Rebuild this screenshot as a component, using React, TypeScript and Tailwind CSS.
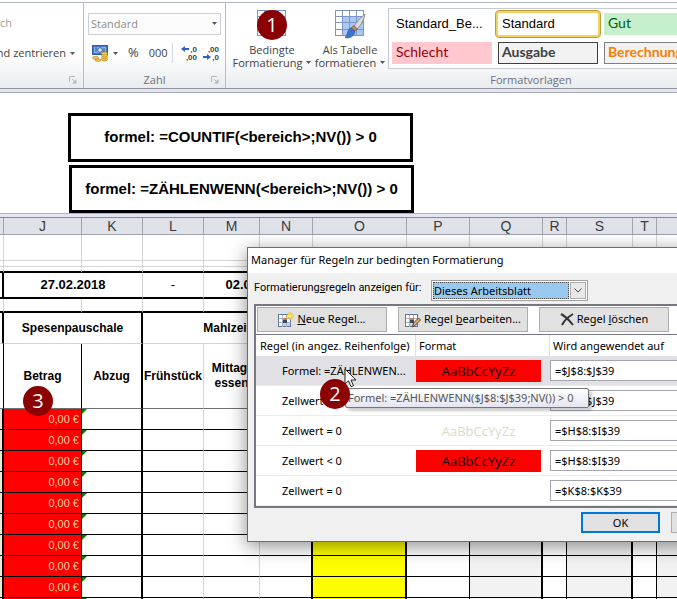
import React from "react";

const ui = "font-['Open_Sans','Noto_Sans',sans-serif]";
const tahoma = "font-['Noto_Sans','Open_Sans',sans-serif]";
const arial = "font-['Liberation_Sans',Arial,sans-serif]";
const lato = "font-['Lato','Open_Sans',sans-serif]";

function Caret() {
  return (
    <svg width="5" height="3" viewBox="0 0 5 3" className="shrink-0" aria-hidden="true">
      <path d="M0 0h5L2.5 3z" fill="#555" />
    </svg>
  );
}

function Launcher() {
  return (
    <svg width="8" height="8" viewBox="0 0 8 8" className="absolute right-[6px] bottom-1" aria-hidden="true" fill="none">
      <path d="M.5 6V.5H6M3 3l3 3" stroke="#b4b8be" />
      <path d="M7.500 3v4.500H3z" fill="#b4b8be" />
    </svg>
  );
}

function Badge({ n, className }: { n: number; className: string }) {
  return (
    <span
      className={`absolute z-20 flex size-[30px] items-center justify-center rounded-full bg-[#8b0000] text-[20px] leading-none text-white ${ui} ${className}`}
    >
      {n}
    </span>
  );
}

function GroupLabel({ children }: { children: React.ReactNode }) {
  return <div className="h-4 text-center leading-4 text-[#6a7080]">{children}</div>;
}

function CurrencyIcon() {
  return (
    <svg width="17" height="17" viewBox="0 0 17 17" aria-hidden="true">
      <rect x=".5" y=".5" width="15" height="9" fill="#4477c4" stroke="#2b5ca8" />
      <path d="M2 2h12v6H2z" fill="#8fb4e8" />
      <path d="M4 3v4M12 3v4M3 3h2M11 7h2" stroke="#2b5ca8" />
      <circle cx="8" cy="5" r="2.300" fill="#dce9fa" stroke="#2b5ca8" />
      <g fill="#f6cf55" stroke="#b67c12" strokeWidth=".7">
        <ellipse cx="12.500" cy="14.500" rx="3" ry="1.500" />
        <ellipse cx="12.500" cy="12.500" rx="3" ry="1.500" />
        <ellipse cx="12.500" cy="10.500" rx="3" ry="1.500" />
        <ellipse cx="12.500" cy="8.500" rx="3" ry="1.500" />
        <ellipse cx="6" cy="15" rx="3" ry="1.300" />
        <ellipse cx="3.500" cy="12.800" rx="3" ry="1.300" />
      </g>
    </svg>
  );
}

function DecimalIcon({ more }: { more: boolean }) {
  return (
    <svg width="16" height="16" viewBox="0 0 16 16" className="overflow-visible" aria-hidden="true">
      <g fontFamily="Liberation Sans, sans-serif" fontSize="8" fontWeight="700" fill="#444" textAnchor="end">
        <text x="16" y="7">{more ? ",0" : ",00"}</text>
        <text x="16" y="15">{more ? ",00" : ",0"}</text>
      </g>
      {more ? (
        <path d="M0 4l4-3v2h4v2H4v2z" fill="#2b62c4" />
      ) : (
        <path d="M8 12l-4-3v2H0v2h4v2z" fill="#2b62c4" />
      )}
    </svg>
  );
}

function GridIcon({ brush }: { brush: boolean }) {
  return (
    <svg width="31" height="30" viewBox="0 0 31 30" aria-hidden="true">
      <rect x=".5" y=".5" width="28" height="25" fill="#fff" stroke="#8b9cc0" />
      <path d="M8 6h21v20H8z" fill={brush ? "#a9c8f5" : "#d5e3f8"} />
      {!brush && <path d="M8 1h13v8H8z" fill="#e2543c" />}
      <path
        d="M.5 0v26M7.500 0v26M14.500 0v26M21.500 0v26M28.500 0v26M0 .5h29M0 6.500h29M0 12.500h29M0 19.500h29M0 25.500h29"
        stroke="#7d95c4"
      />
      {brush && (
        <g>
          <path d="M30 4c-5 4-8 8-11 12l3 3c4-4 7-9 8-15z" fill="#dcdcdc" stroke="#8b8f96" />
          <path d="M19 15.500l3.500 3.500-2.500 2.500-4-3.500z" fill="#b98a58" stroke="#6e5a44" strokeWidth=".7" />
          <path d="M16 18l4 3.500c-1 5-5 7-10 6 3-2 2-8 6-9.500z" fill="#3c73cc" stroke="#28509a" strokeWidth=".7" />
        </g>
      )}
    </svg>
  );
}

function SheetIcon({ kind }: { kind: "new" | "edit" }) {
  return (
    <svg width="16" height="16" viewBox="0 0 16 16" aria-hidden="true" className="shrink-0">
      <rect x=".5" y="2.500" width="12" height="12" fill="#fff" stroke="#66789c" />
      <path d="M5 11h7v3H5z" fill="#bcd2f2" />
      <path d="M4.500 3v12M8.500 3v12M1 6.500h12M1 10.500h12" stroke="#a3b1cb" />
      <path d="M5 6h4v2H5z" fill="#c9824a" />
      <path d="M5 8h4v3H5z" fill="#3c4658" />
      {kind === "new" ? (
        <g>
          <path d="M12 0v8M8 4h8M9.500 1.500l5 5M14.500 1.500l-5 5" stroke="#f0c020" strokeWidth="1.200" />
          <circle cx="12" cy="4" r="1.800" fill="#fff27a" />
        </g>
      ) : (
        <path d="M13.500 6l2 2-5 5-3 2 1-4z" fill="#eab060" stroke="#4a4038" />
      )}
    </svg>
  );
}

function Ribbon() {
  const group = "relative flex shrink-0 flex-col justify-between border-r border-[#b9bdc5]";
  return (
    <header
      className={`flex h-[93px] flex-col border-b border-[#a3a7b0] bg-[#e6e7ec] text-[11px] text-[#444] ${ui}`}
    >
      <div className="h-[3px] border-b border-[#b3b7c3] bg-white" />
      <div className="flex h-[86px] overflow-hidden border-b border-[#8f95a0] bg-linear-to-b from-white from-60% to-[#e9ebee]">
        <div className={`${group} w-[84px]`}>
          <div className="flex flex-col">
            <span className="mt-[10px] h-5 leading-5 text-[#9a9a9a]">ch</span>
            <button className="mt-[10px] flex h-5 items-center justify-end gap-1 pr-2 whitespace-nowrap">
              nd zentrieren <Caret />
            </button>
          </div>
          <Launcher />
        </div>

        <div className={`${group} w-[142px] px-1`}>
          <div>
            <div className="relative mt-[10px]">
              <select
                aria-label="Zahlenformat"
                className="block h-[22px] w-full appearance-none border border-[#cdd0d5] bg-[#fcfcfd] pl-[2px] text-[11px] text-[#8c8c8c]"
              >
                <option>Standard</option>
              </select>
              <span className="pointer-events-none absolute top-[9px] right-1">
                <Caret />
              </span>
            </div>
            <div className="mt-2 flex h-5 items-center pl-1">
              <button className="flex items-center gap-1" aria-label="Währung">
                <CurrencyIcon />
                <Caret />
              </button>
              <button className="ml-[10px] text-[13px]">%</button>
              <button className="ml-[10px]">000</button>
              <span className="mr-2 ml-1 h-5 w-px bg-[#d3d6db]" />
              <button aria-label="Dezimalstelle hinzufügen">
                <DecimalIcon more />
              </button>
              <button className="ml-[6px]" aria-label="Dezimalstelle löschen">
                <DecimalIcon more={false} />
              </button>
            </div>
          </div>
          <GroupLabel>Zahl</GroupLabel>
          <Launcher />
        </div>

        <div className="flex min-w-0 flex-1 flex-col justify-between">
          <div className="flex pt-[5px]">
            <div className="flex w-[162px] shrink-0 gap-1 pl-[7px]">
              <button className="relative flex w-[78px] flex-col items-center pt-[2px] leading-[13px]">
                <GridIcon brush={false} />
                <Badge n={1} className="top-[2px] left-6" />
                <span className="mt-[3px]">Bedingte</span>
                <span className="flex items-center gap-1">
                  Formatierung <Caret />
                </span>
              </button>
              <button className="flex w-[70px] flex-col items-center pt-[2px] leading-[13px]">
                <GridIcon brush />
                <span className="mt-[3px] whitespace-nowrap">Als Tabelle</span>
                <span className="flex items-center gap-1">
                  formatieren <Caret />
                </span>
              </button>
            </div>
            <div className="grid w-[400px] shrink-0 grid-cols-[100px_100px_100px] gap-[6px] border border-[#c6c9cf] bg-white py-1 pl-[3px]">
              <button className={`h-[22px] pl-1 text-left text-[13px] text-black ${arial}`}>Standard_Be...</button>
              <button
                className={`h-[22px] rounded-[1px] pl-1 text-left text-[13px] text-black ring-2 ring-[#f3d35f] outline-1 outline-offset-2 outline-[#c29a3a] ${arial}`}
              >
                Standard
              </button>
              <button className={`h-[22px] bg-[#c6efce] pb-[3px] pl-1 text-left text-[14px] leading-[19px] text-[#006100] ${lato}`}>
                Gut
              </button>
              <button
                className={`h-[22px] bg-[#ffc7ce] pb-[3px] pl-1 text-left text-[14px] leading-[19px] text-[#9c0006] ${lato}`}
              >
                Schlecht
              </button>
              <button
                className={`h-[22px] border border-[#3f3f3f] bg-[#f2f2f2] pb-[3px] pl-[3px] text-left text-[14px] leading-[17px] font-bold text-[#3f3f3f] ${lato}`}
              >
                Ausgabe
              </button>
              <button
                className={`h-[22px] border border-[#7f7f7f] bg-[#f2f2f2] pb-[3px] pl-[3px] text-left text-[14px] leading-[17px] font-bold text-[#fa7d00] ${lato}`}
              >
                Berechnung
              </button>
            </div>
          </div>
          <div className="w-[610px]">
            <GroupLabel>Formatvorlagen</GroupLabel>
          </div>
        </div>
      </div>
    </header>
  );
}

function FormulaNotes() {
  const box = `flex w-[345px] items-center justify-center border-3 border-black text-[15px] font-bold text-black ${arial}`;
  return (
    <section className="border-b border-[#b0b4bc] bg-white pt-5 pl-[68px]">
      <p className={`${box} h-[49px]`}>{"formel: =COUNTIF(<bereich>;NV()) > 0"}</p>
      <p className={`${box} mt-[3px] ml-px h-[48px]`}>{"formel: =ZÄHLENWENN(<bereich>;NV()) > 0"}</p>
    </section>
  );
}

const columns = [
  { name: "", w: "w-[4px]" },
  { name: "J", w: "w-[78px]" },
  { name: "K", w: "w-[61px]" },
  { name: "L", w: "w-[61px]" },
  { name: "M", w: "w-[56px]" },
  { name: "N", w: "w-[53px]" },
  { name: "O", w: "w-[94px]" },
  { name: "P", w: "w-[63px]" },
  { name: "Q", w: "w-[73px]" },
  { name: "R", w: "w-[24px]" },
  { name: "S", w: "w-[66px]" },
  { name: "T", w: "w-[24px]" },
  { name: "", w: "w-[60px]" },
];

const gridR = "border-r border-r-[#d4d4d4]";
const thinR = "border-r border-r-black";
const thickR = "border-r-2 border-r-black";

const plainCells = [
  `${thickR} bg-[#ebe8d6]`,
  "",
  "",
  gridR,
  gridR,
  thickR,
  `${thickR} bg-[#ffff00]`,
  thinR,
  `${thickR} bg-[#f2f2f2]`,
  thinR,
  `${thickR} bg-[#f2f2f2]`,
  thinR,
  "bg-[#f2f2f2]",
];

function EmptyRow({ className, edge }: { className: string; edge: string }) {
  return (
    <tr className={className}>
      {columns.map((_, i) => (
        <td key={i} className={`${gridR} ${edge}`} />
      ))}
    </tr>
  );
}

function Sheet() {
  const label = "text-center align-middle text-[12px] leading-[15px] font-bold text-black";
  const under = "border-b-2 border-b-black";
  return (
    <table className={`w-[717px] table-fixed border-separate border-spacing-0 bg-white ${arial}`}>
      <colgroup>
        {columns.map((c, i) => (
          <col key={i} className={c.w} />
        ))}
      </colgroup>
      <thead>
        <tr className="h-[17px] bg-[#dfe2e8] text-[14px] leading-4 text-[#3c3c3c]">
          {columns.map((c, i) => (
            <th key={i} className="border-r border-b border-[#9fa4ad] p-0 font-normal">
              {c.name}
            </th>
          ))}
        </tr>
      </thead>
      <tbody>
        <EmptyRow className="h-[26px]" edge="border-b border-b-[#d4d4d4]" />
        <EmptyRow className="h-[6px]" edge="border-b border-b-[#d4d4d4]" />
        <EmptyRow className="h-[6px]" edge={under} />
        <tr className="h-[26px] text-[13px] leading-5 font-bold">
          <td className={`${thickR} ${under} p-0`} />
          <td colSpan={2} className={`${gridR} ${under} p-0 text-center`}>27.02.2018</td>
          <td className={`${gridR} ${under} p-0 text-center font-normal`}>-</td>
          <td colSpan={2} className={`${gridR} ${under} p-0 text-center`}>02.03.2018</td>
          <td colSpan={7} className={`${under} p-0`} />
        </tr>
        <EmptyRow className="h-[14px]" edge={under} />
        <tr className="h-[31px]">
          <td className={`${thickR} border-b border-b-[#d4d4d4] p-0`} />
          <td colSpan={2} className={`${label} ${thickR} border-b border-b-[#d4d4d4] p-0`}>Spesenpauschale</td>
          <td colSpan={3} className={`${label} ${thickR} border-b border-b-[#d4d4d4] p-0`}>Mahlzeit</td>
          <td colSpan={7} className="p-0" />
        </tr>
        <tr className="h-[65px]">
          <td className={`${thinR} border-b border-b-[#6f6f6f] p-0`} />
          <td className={`${label} ${thinR} border-b border-b-[#6f6f6f] p-0`}>Betrag</td>
          <td className={`${label} ${thickR} border-b border-b-[#6f6f6f] p-0`}>Abzug</td>
          <td className={`${label} ${gridR} border-b border-b-[#6f6f6f] p-0`}>Frühstück</td>
          <td className={`${label} ${gridR} border-b border-b-[#6f6f6f] p-0`}>
            Mittag-
            <br />
            essen
          </td>
          <td colSpan={8} className="border-b border-b-[#6f6f6f] p-0" />
        </tr>
        {Array.from({ length: 10 }, (_, r) => (
          <tr key={r} className="h-[21px]">
            {plainCells.map((cls, i) =>
              i === 1 ? (
                <td
                  key={i}
                  className={`${thinR} border-b border-b-black bg-[#ff0000] p-0 pr-[2px] text-right text-[11px] leading-5 text-[#f5d3a0]`}
                >
                  {r < 9 && "0,00 €"}
                </td>
              ) : i === 2 ? (
                <td key={i} className={`${thickR} border-b border-b-black p-0 align-top`}>
                  <svg width="5" height="5" viewBox="0 0 5 5" className="block" aria-hidden="true">
                    <path d="M0 0h5L0 5z" fill="#008000" />
                  </svg>
                </td>
              ) : (
                <td key={i} className={`${cls} border-b border-b-black p-0`} />
              ),
            )}
          </tr>
        ))}
      </tbody>
    </table>
  );
}

const rules = [
  { name: "Formel: =ZÄHLENWEN...", format: "red", range: "=$J$8:$J$39", active: true },
  { name: "Zellwert = 0", format: "none", range: "=$J$8:$J$39", active: false },
  { name: "Zellwert = 0", format: "pale", range: "=$H$8:$I$39", active: false },
  { name: "Zellwert < 0", format: "red", range: "=$H$8:$I$39", active: false },
  { name: "Zellwert = 0", format: "none", range: "=$K$8:$K$39", active: false },
];

const swatch: Record<string, string> = {
  red: "bg-[#ff0000] text-black",
  pale: "text-[#ddd9c4]",
  none: "text-transparent",
};

function RuleManager() {
  const tool =
    "flex h-[25px] w-[130px] items-center justify-center gap-[3px] border border-[#adadad] bg-[#e1e1e1] whitespace-nowrap";
  return (
    <div
      role="dialog"
      aria-label="Manager für Regeln zur bedingten Formatierung"
      className={`absolute top-[29px] left-[247px] z-10 w-[560px] border border-[#1883d7] bg-[#f0f0f0] text-[11px] text-black shadow-[0_4px_18px_rgba(0,0,0,0.45)] ${tahoma}`}
    >
      <h2 className="h-[25px] bg-white pl-[3px] leading-6">Manager für Regeln zur bedingten Formatierung</h2>
      <div className="flex h-[31px] items-center pt-1 pl-[6px]">
        <label htmlFor="scope" className="w-[177px] pb-1 font-['Roboto','Noto_Sans',sans-serif] whitespace-nowrap">
          Formatierung<u>s</u>regeln anzeigen für:
        </label>
        <div className="relative h-[21px] w-[157px] border border-[#a0a0a0] bg-white p-px">
          <select
            id="scope"
            className="block h-[17px] w-[136px] appearance-none border border-dotted border-[#444] bg-[#99c9ef] text-[11px] leading-[15px]"
          >
            <option>Dieses Arbeitsblatt</option>
          </select>
          <span className="pointer-events-none absolute top-px right-px flex h-[17px] w-4 items-center justify-center border border-[#adadad] bg-[#e8e8e8]">
            <svg width="8" height="5" viewBox="0 0 8 5" fill="none" aria-hidden="true">
              <path d="M.5.5L4 4 7.500.5" stroke="#444" />
            </svg>
          </span>
        </div>
      </div>
      <div className="ml-[6px] h-[204px] border-2 border-[#77777f] bg-white">
        <div className="flex gap-[11px] p-px pb-[2px]">
          <button className={tool}>
            <SheetIcon kind="new" />
            <span>
              <u>N</u>eue Regel...
            </span>
          </button>
          <button className={tool}>
            <SheetIcon kind="edit" />
            <span>
              Regel <u>b</u>earbeiten...
            </span>
          </button>
          <button className={tool}>
            <svg width="14" height="13" viewBox="0 0 14 13" fill="none" aria-hidden="true">
              <path d="M1 1c4 2 8 6 12 11M13 1C8 4 4 8 2 12" stroke="#333" strokeWidth="2" />
            </svg>
            <span>
              Regel <u>l</u>öschen
            </span>
          </button>
        </div>
        <table className="w-full table-fixed border-separate border-spacing-0 border-t border-[#77777f] bg-white">
          <colgroup>
            <col className="w-[160px]" />
            <col className="w-[134px]" />
            <col />
          </colgroup>
          <thead>
            <tr className="h-[21px] text-left leading-5">
              <th className="border-r border-[#e0e0e0] p-0 pl-1 font-normal whitespace-nowrap">
                Regel (in angez. Reihenfolge)
              </th>
              <th className="border-r border-[#e0e0e0] p-0 pl-[3px] font-normal">Format</th>
              <th className="p-0 pl-[3px] font-normal">Wird angewendet auf</th>
            </tr>
          </thead>
          <tbody>
            {rules.map((r, i) => (
              <tr key={i} className={r.active ? "h-[30px] bg-[#e1e0e5]" : "h-[30px]"}>
                <td className="border-b border-[#ececec] p-0 pt-px pl-[26px] whitespace-nowrap">{r.name}</td>
                <td className="border-b border-[#ececec] p-0">
                  <div className={`h-[22px] w-[125px] text-center text-[13px] leading-[22px] ${ui} ${swatch[r.format]}`}>
                    {r.format !== "none" && "AaBbCcYyZz"}
                  </div>
                </td>
                <td className="border-b border-[#ececec] p-0">
                  <input
                    aria-label={`Bereich für Regel ${i + 1}`}
                    defaultValue={r.range}
                    className="block h-[21px] w-[180px] border border-[#a5a5ad] bg-white pl-1 text-[11px]"
                  />
                </td>
              </tr>
            ))}
          </tbody>
        </table>
      </div>
      <div className="flex gap-[11px] pt-1 pb-2 pl-[333px]">
        <button className="h-[21px] w-[79px] border-2 border-[#0078d7] bg-[#e1e1e1] leading-4">OK</button>
        <button className="h-[21px] w-[79px] border border-[#adadad] bg-[#e1e1e1] leading-4">Abbrechen</button>
      </div>

      <div
        role="tooltip"
        className="absolute top-[140px] left-[97px] flex h-[20px] w-[244px] items-center rounded-[2px] border border-[#767676] bg-linear-to-b from-white to-[#e4e5f0] pl-[2px] whitespace-nowrap text-[#575757] shadow-[3px_3px_3px_rgba(0,0,0,0.2)]"
      >
        {"Formel: =ZÄHLENWENN($J$8:$J$39;NV()) > 0"}
      </div>
      <svg width="13" height="20" viewBox="0 0 13 20" className="absolute top-[120px] left-[96px] z-20" aria-hidden="true">
        <path d="M1 1v15l3.500-3.300 2.500 6 2.500-1-2.500-5.700H12z" fill="#fff" stroke="#222" />
      </svg>
      <Badge n={2} className="top-[131px] left-[72px]" />
    </div>
  );
}

export default function App() {
  return (
    <div className="h-screen overflow-hidden bg-white">
      <Ribbon />
      <FormulaNotes />
      <div className="h-[4px] border-b border-[#858a94] bg-[#e4e5f2]" />
      <main className="relative">
        <Sheet />
        <Badge n={3} className="top-[168px] left-[23px]" />
        <RuleManager />
      </main>
    </div>
  );
}
